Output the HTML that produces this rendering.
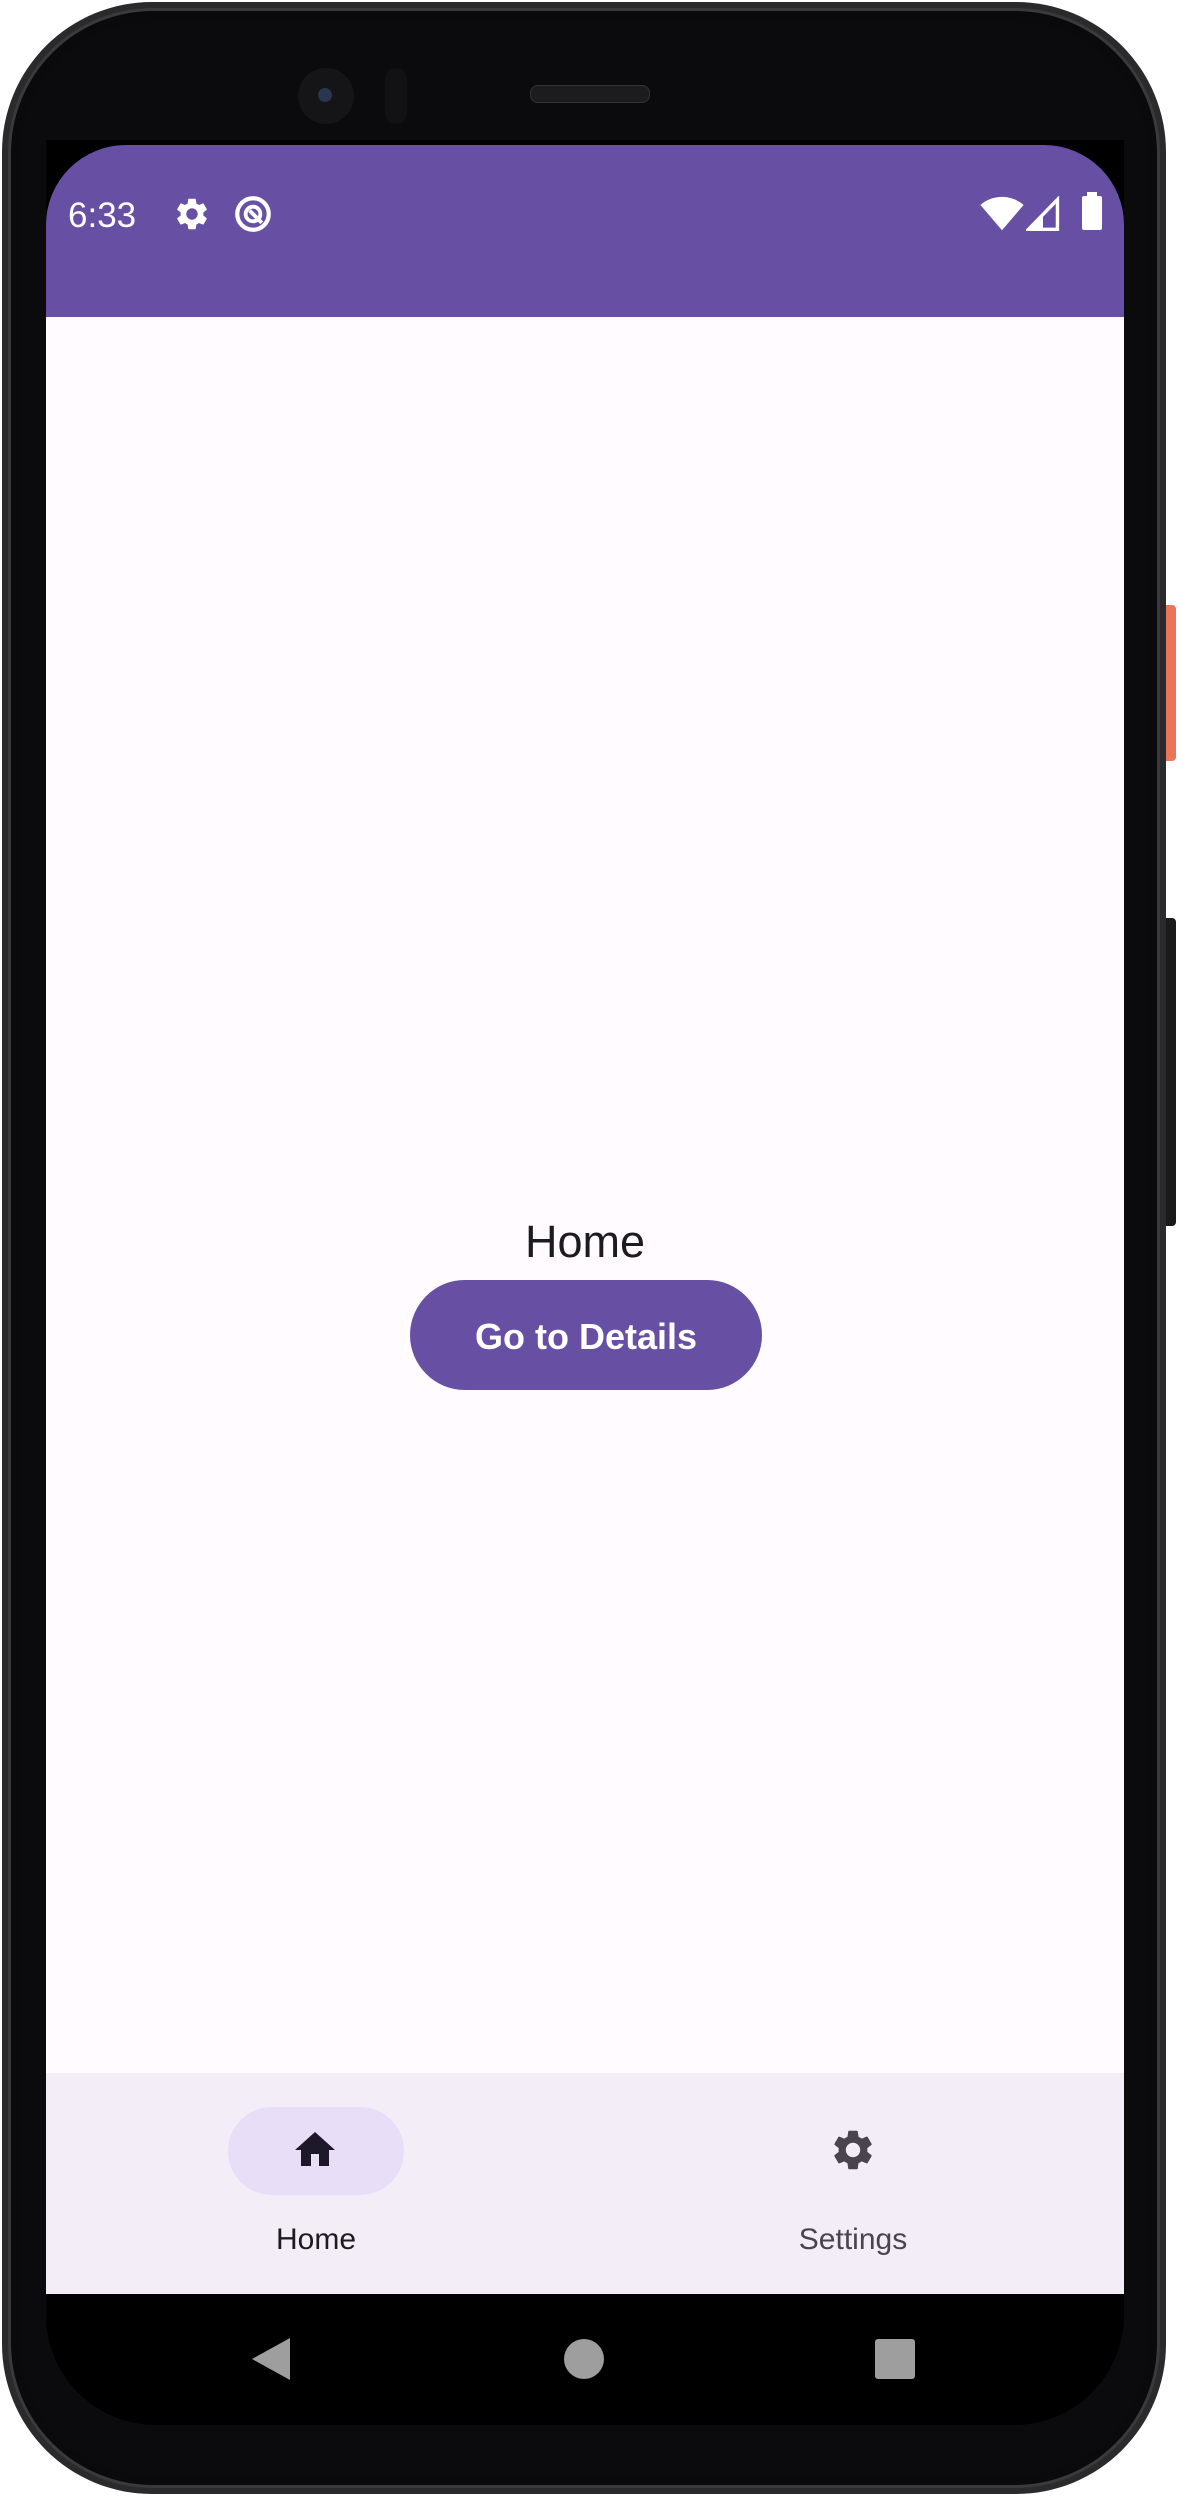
<!DOCTYPE html>
<html><head><meta charset="utf-8"><style>
html,body{margin:0;padding:0;background:#fff;}
body{width:1178px;height:2498px;position:relative;overflow:hidden;font-family:"Liberation Sans",sans-serif;}
.abs{position:absolute;}
</style></head><body>
<div class="abs" style="left:1150px;top:605px;width:26px;height:156px;background:#e8775a;border-radius:4px;"></div>
<div class="abs" style="left:1150px;top:918px;width:26px;height:308px;background:#1a1a1a;border-radius:4px;"></div>
<div class="abs" style="left:2px;top:2px;width:1164px;height:2492px;background:#2a2a2c;border-radius:150px;"></div>
<div class="abs" style="left:8px;top:8px;width:1152px;height:2480px;background:#0a0a0c;border-radius:145px;border:3px solid #3a3a3c;box-sizing:border-box;"></div>
<div class="abs" style="left:20px;top:22px;width:1128px;height:2454px;background:#0b0b0d;border-radius:130px;"></div>
<div class="abs" style="left:46px;top:140px;width:1078px;height:2285px;background:#000;border-radius:0 0 110px 110px;"></div>
<div class="abs" style="left:298px;top:68px;width:56px;height:56px;border-radius:50%;background:#151518;"></div>
<div class="abs" style="left:318px;top:88px;width:14px;height:14px;border-radius:50%;background:#2a3550;"></div>
<div class="abs" style="left:385px;top:68px;width:22px;height:56px;border-radius:11px;background:#121215;"></div>
<div class="abs" style="left:530px;top:85px;width:118px;height:16px;border-radius:8px;background:#1c1c1f;border:1px solid #333;"></div>
<div class="abs" style="left:46px;top:145px;width:1078px;height:172px;background:#6750a4;border-radius:80px 80px 0 0;"></div>
<div class="abs" style="left:68px;top:196px;color:#fff;font-size:35px;">6:33</div>
<svg class="abs" style="left:173px;top:195px" width="38" height="38" viewBox="0 0 24 24"><path fill="#fff" d="M19.14 12.94c.04-.3.06-.61.06-.94 0-.32-.02-.64-.07-.94l2.030-1.58a.49.49 0 0 0 .12-.61l-1.92-3.32a.488.488 0 0 0-.59-.22l-2.39.96c-.5-.38-1.030-.7-1.62-.94l-.36-2.54a.484.484 0 0 0-.48-.41h-3.84c-.24 0-.43.17-.47.41l-.36 2.54c-.59.24-1.13.57-1.62.94l-2.39-.96c-.22-.08-.47 0-.59.22L2.74 8.87c-.12.21-.08.47.12.61l2.03 1.58c-.05.3-.09.63-.09.94s.02.64.07.94l-2.03 1.58a.49.49 0 0 0-.12.61l1.92 3.32c.12.22.37.29.59.22l2.39-.96c.5.38 1.03.7 1.62.94l.36 2.54c.05.24.24.41.48.41h3.84c.24 0 .44-.17.47-.41l.36-2.54c.59-.24 1.13-.56 1.62-.94l2.39.96c.22.08.47 0 .59-.22l1.92-3.32c.12-.22.07-.47-.12-.61l-2.01-1.58zM12 15.6c-1.98 0-3.6-1.62-3.6-3.6s1.62-3.6 3.6-3.6 3.6 1.62 3.6 3.6-1.62 3.6-3.6 3.6z"/></svg>
<svg class="abs" style="left:232px;top:193px" width="42" height="42" viewBox="0 0 24 24"><circle cx="12" cy="12" r="9" fill="none" stroke="#fff" stroke-width="2.4"/><circle cx="12" cy="12" r="4.2" fill="none" stroke="#fff" stroke-width="2.2"/><path d="M10 10l7 7" stroke="#fff" stroke-width="2.2"/></svg>
<svg class="abs" style="left:980px;top:196px" width="44" height="36" viewBox="0 0 24 20"><path fill="#fff" d="M12 19L0 5C3 2.3 7.3 0.5 12 0.5S21 2.3 24 5z"/></svg>
<svg class="abs" style="left:1026px;top:196px" width="34" height="36" viewBox="0 0 20 20"><path fill="none" stroke="#fff" stroke-width="2" d="M18.5 1.5V19H1.5z"/><path fill="#fff" d="M1 19.5L10 10.5V19.5z"/></svg>
<div class="abs" style="left:1082px;top:196px;width:20px;height:34px;background:#fff;border-radius:2px;"></div>
<div class="abs" style="left:1087px;top:192px;width:10px;height:5px;background:#fff;"></div>
<div class="abs" style="left:46px;top:317px;width:1078px;height:1760px;background:#fffbfe;"></div>
<div class="abs" style="left:46px;top:1216px;width:1078px;text-align:center;font-size:45px;color:#1c1b1f;line-height:52px;">Home</div>
<div class="abs" style="left:410px;top:1280px;width:352px;height:110px;background:#6750a4;border-radius:55px;color:#fff;font-size:36px;font-weight:bold;text-align:center;line-height:114px;">Go to Details</div>
<div class="abs" style="left:46px;top:2073px;width:1078px;height:221px;background:#f3edf7;"></div>
<div class="abs" style="left:228px;top:2107px;width:176px;height:88px;background:#e8def8;border-radius:44px;"></div>
<svg class="abs" style="left:291px;top:2126px" width="48" height="48" viewBox="0 0 24 24"><path fill="#1d192b" d="M10 20v-6h4v6h5v-8h3L12 3 2 12h3v8z"/></svg>
<div class="abs" style="left:216px;top:2223px;width:200px;text-align:center;font-size:30px;color:#1d1b20;">Home</div>
<svg class="abs" style="left:829px;top:2126px" width="48" height="48" viewBox="0 0 24 24"><path fill="#49454f" d="M19.14 12.94c.04-.3.06-.61.06-.94 0-.32-.02-.64-.07-.94l2.03-1.58a.49.49 0 0 0 .12-.61l-1.92-3.32a.488.488 0 0 0-.59-.22l-2.39.96c-.5-.38-1.03-.7-1.62-.94l-.36-2.54a.484.484 0 0 0-.48-.41h-3.84c-.24 0-.43.17-.47.41l-.36 2.54c-.59.24-1.13.57-1.62.94l-2.39-.96c-.22-.08-.47 0-.59.22L2.74 8.87c-.12.21-.08.47.12.61l2.03 1.58c-.05.3-.09.63-.09.94s.02.64.07.94l-2.03 1.58a.49.49 0 0 0-.12.61l1.92 3.32c.12.22.37.29.59.22l2.39-.96c.5.38 1.03.7 1.62.94l.36 2.54c.05.24.24.41.48.41h3.84c.24 0 .44-.17.47-.41l.36-2.54c.59-.24 1.13-.56 1.62-.94l2.39.96c.22.08.47 0 .59-.22l1.92-3.32c.12-.22.07-.47-.12-.61l-2.01-1.58zM12 15.6c-1.98 0-3.6-1.62-3.6-3.6s1.62-3.6 3.6-3.6 3.6 1.62 3.6 3.6-1.62 3.6-3.6 3.6z"/></svg>
<div class="abs" style="left:753px;top:2223px;width:200px;text-align:center;font-size:30px;color:#49454f;">Settings</div>
<svg class="abs" style="left:250px;top:2336px" width="42" height="46" viewBox="0 0 42 46"><path fill="#9e9e9e" d="M40 2V44L2 23z"/></svg>
<div class="abs" style="left:564px;top:2339px;width:40px;height:40px;border-radius:50%;background:#9e9e9e;"></div>
<div class="abs" style="left:875px;top:2339px;width:40px;height:40px;border-radius:3px;background:#9e9e9e;"></div>
</body></html>
